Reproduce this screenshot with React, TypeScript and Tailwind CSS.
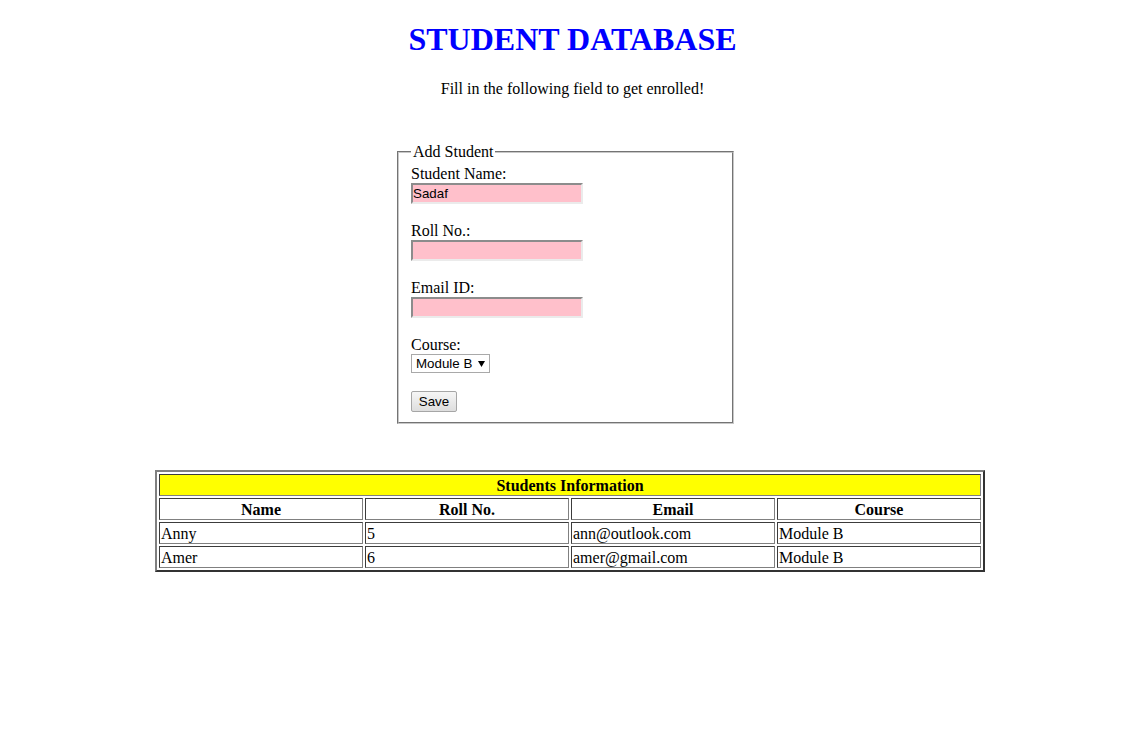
import { useState } from "react";

const students = [
    { name: "Anny", roll: "5", email: "ann@outlook.com", course: "Module B" },
    { name: "Amer", roll: "6", email: "amer@gmail.com", course: "Module B" },
];

const inputClass =
    "block w-[172px] h-[21px] px-[0px] bg-[#ffc0cb] border-2 border-t-[#8c8c8c] border-l-[#8c8c8c] border-r-[#ebebeb] border-b-[#ebebeb] text-[13.33px] leading-none text-black outline-none [font-family:'Liberation_Sans',Arial,sans-serif]";

const cellClass =
    "border border-t-[#3c3c3c] border-l-[#3c3c3c] border-r-[#808080] border-b-[#808080] px-[1px] pt-[2px] pb-0 leading-[18px] h-[22px]";

const App = () => {
    const [name, setName] = useState("Sadaf");
    const [roll, setRoll] = useState("");
    const [email, setEmail] = useState("");
    const [course, setCourse] = useState("Module B");

    return (
        <div className="min-h-[729px] bg-white text-black text-[16px] [font-family:'Liberation_Serif','Times_New_Roman',serif] flex flex-col">
            <h1 className="mt-[21.44px] text-center text-[32px] font-bold text-[#0000ff] leading-[36.8px]">
                STUDENT DATABASE
            </h1>
            <p className="mt-[21.44px] text-center leading-[18.4px]">
                Fill in the following field to get enrolled!
            </p>

            <form
                className="mt-[45px] ml-[397px] w-[337px]"
                onSubmit={(e) => e.preventDefault()}
            >
                <fieldset className="border-2 [border-style:groove] border-[#c8c8c8] pt-[3.6px] px-[12px] pb-[10px]">
                    <legend className="px-[2px] leading-[18.4px]">
                        Add Student
                    </legend>

                    <div className="leading-[18.4px]">Student Name:</div>
                    <input
                        className={inputClass}
                        value={name}
                        onChange={(e) => setName(e.target.value)}
                    />
                    <div className="h-[17.6px]" />

                    <div className="leading-[18.4px]">Roll No.:</div>
                    <input
                        className={inputClass}
                        value={roll}
                        onChange={(e) => setRoll(e.target.value)}
                    />
                    <div className="h-[17.6px]" />

                    <div className="leading-[18.4px]">Email ID:</div>
                    <input
                        className={inputClass}
                        value={email}
                        onChange={(e) => setEmail(e.target.value)}
                    />
                    <div className="h-[17.6px]" />

                    <div className="leading-[18.4px]">Course:</div>
                    <div className="relative w-[79px] h-[19px]">
                        <select
                            className="appearance-none block w-[79px] h-[19px] pl-[4px] pr-[14px] border border-[#a9a9a9] bg-white text-[13.33px] leading-none text-black outline-none [font-family:'Liberation_Sans',Arial,sans-serif]"
                            value={course}
                            onChange={(e) => setCourse(e.target.value)}
                        >
                            <option>Module A</option>
                            <option>Module B</option>
                            <option>Module C</option>
                        </select>
                        <svg
                            className="absolute right-[5px] top-[7px] pointer-events-none"
                            width="7"
                            height="6"
                            viewBox="0 0 7 6"
                        >
                            <path d="M0 0 H7 L3.5 6 Z" fill="#000" />
                        </svg>
                    </div>
                    <div className="h-[18px]" />

                    <button
                        type="submit"
                        className="block w-[46px] h-[21px] rounded-[2px] border border-[#a6a6a6] bg-gradient-to-b from-[#f6f6f6] to-[#dedede] text-[13.33px] leading-none text-black [font-family:'Liberation_Sans',Arial,sans-serif]"
                    >
                        Save
                    </button>
                </fieldset>
            </form>

            <table className="mt-[46px] ml-[155px] w-[830px] table-fixed border-separate border-spacing-[2px] border-2 border-t-[#808080] border-l-[#808080] border-r-[#333333] border-b-[#333333]">
                <thead>
                    <tr>
                        <th
                            colSpan={4}
                            className={`${cellClass} bg-[#ffff00] font-bold text-center`}
                        >
                            Students Information
                        </th>
                    </tr>
                    <tr>
                        <th className={`${cellClass} font-bold text-center`}>Name</th>
                        <th className={`${cellClass} font-bold text-center`}>Roll No.</th>
                        <th className={`${cellClass} font-bold text-center`}>Email</th>
                        <th className={`${cellClass} font-bold text-center`}>Course</th>
                    </tr>
                </thead>
                <tbody>
                    {students.map((s) => (
                        <tr key={s.name}>
                            <td className={cellClass}>{s.name}</td>
                            <td className={cellClass}>{s.roll}</td>
                            <td className={cellClass}>{s.email}</td>
                            <td className={cellClass}>{s.course}</td>
                        </tr>
                    ))}
                </tbody>
            </table>
        </div>
    );
};

export default App;
